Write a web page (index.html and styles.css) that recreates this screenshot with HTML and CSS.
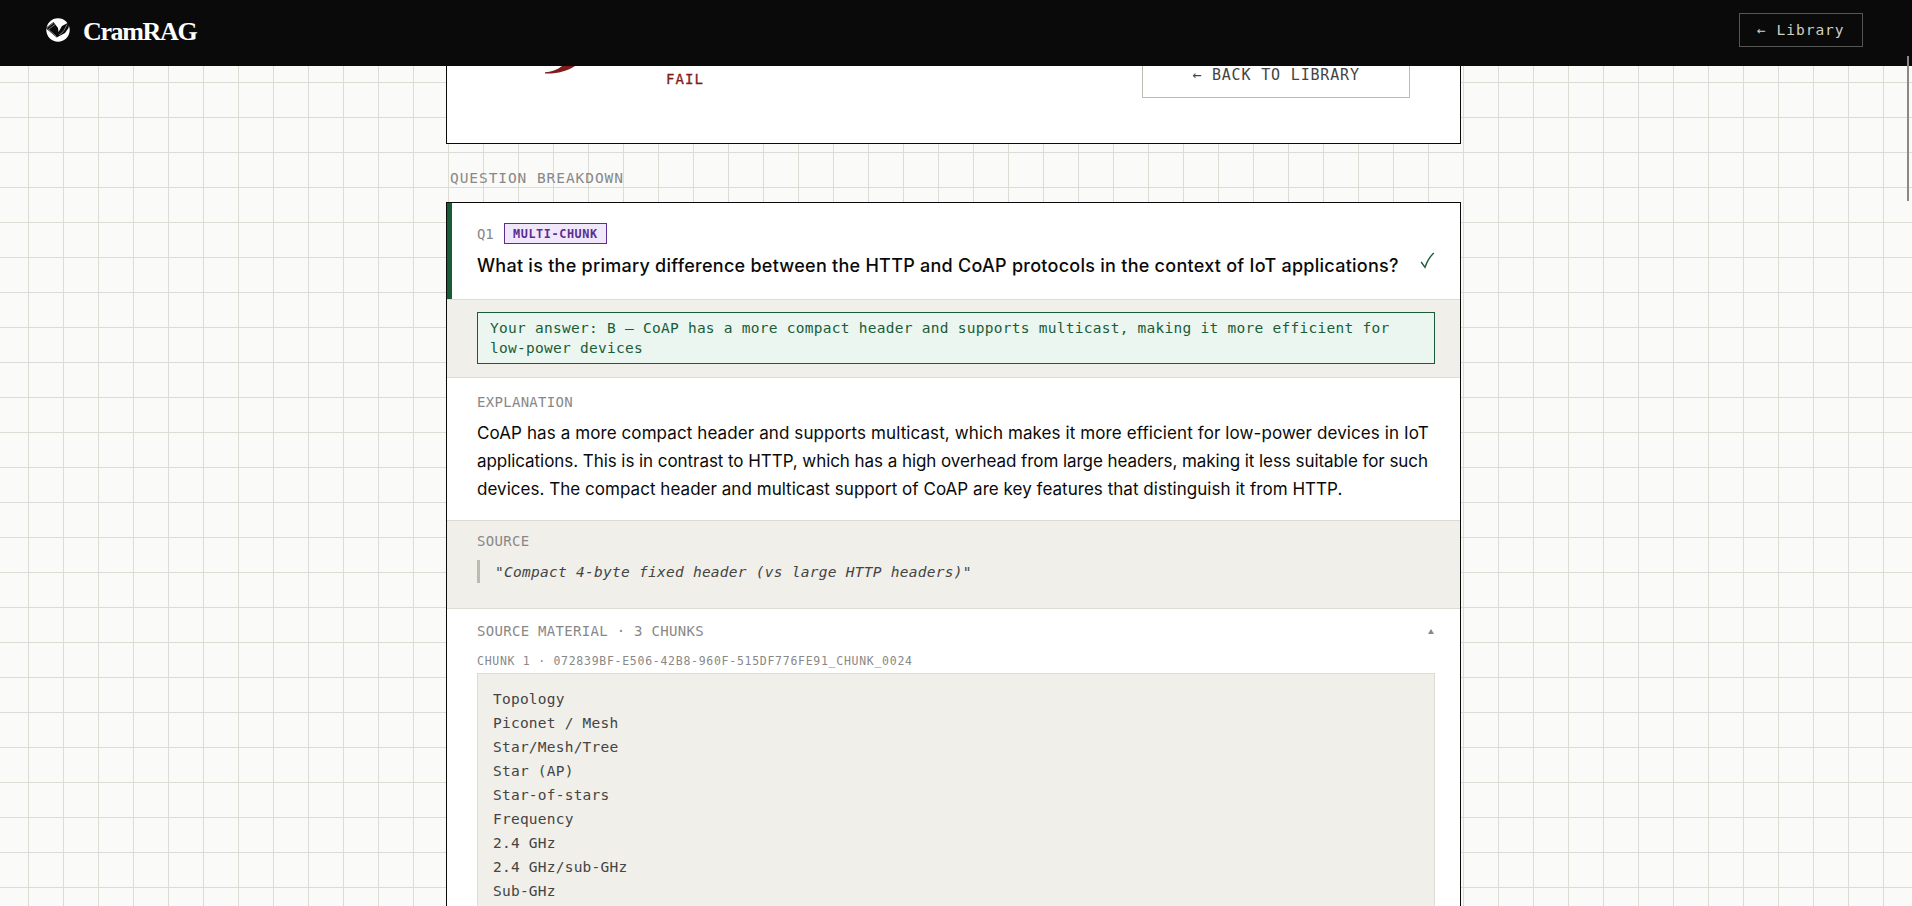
FILE: index.html
```html
<!DOCTYPE html>
<html lang="en">
<head>
<meta charset="utf-8">
<title>CramRAG</title>
<link rel="stylesheet" href="styles.css">
</head>
<body>
<header class="nav">
  <div class="brand">
    <svg class="logo" viewBox="0 0 26 24" width="26" height="24">
      <circle cx="13" cy="12" r="11.7" fill="#fff"/>
      <path d="M0.500 10 L8.500 4 L13 10 L13.500 14 L17 8 L24.500 4 L23.500 10 L20 15 L11.700 19.500 Z" fill="#0a0a0a"/>
      <path d="M1.500 10 L8.500 5 M2.500 10.500 L11.500 18.500 M4 11 L10 6.500 M14 17 C18 15 20 11 22 6.500" stroke="#aaa" stroke-width=".7" fill="none"/>
    </svg>
    <span class="name">CramRAG</span>
  </div>
  <a class="lib">← Library</a>
</header>
<main class="page">
  <section class="card score">
    <div class="result"><span class="big"><svg width="30" height="8" viewBox="0 0 30 8"><path d="M0 6.200 C6 6 12 4 17 0 H30 C22 5 12 8 0 7.500 Z" fill="#7f1d1d"/></svg></span><span class="fail">FAIL</span></div>
    <a class="back">← BACK TO LIBRARY</a>
  </section>
  <h2 class="heading">QUESTION BREAKDOWN</h2>
  <section class="card">
    <div class="question">
      <div class="qbody">
        <div class="meta"><span class="qn">Q1</span><span class="tag">MULTI-CHUNK</span></div>
        <div class="qtext">What is the primary difference between the HTTP and CoAP protocols in the context of IoT applications?</div>
      </div>
      <svg class="tick" width="15" height="17" viewBox="0 0 15 17"><path d="M1.200 10 L5 15.300 C7 9.500 10 4.500 13.800 1" fill="none" stroke="#1a5c38" stroke-width="1.400"/></svg>
    </div>
    <div class="answer"><div class="given">Your answer: B — CoAP has a more compact header and supports multicast, making it more efficient for<br>low-power devices</div></div>
    <div class="explain">
      <div class="label">EXPLANATION</div>
      <p class="prose"><span class="l1">CoAP has a more compact header and supports multicast, which makes it more efficient for low-power devices in IoT</span><br><span class="l2">applications. This is in contrast to HTTP, which has a high overhead from large headers, making it less suitable for such</span><br><span class="l3">devices. The compact header and multicast support of CoAP are key features that distinguish it from HTTP.</span></p>
    </div>
    <div class="source">
      <div class="label">SOURCE</div>
      <blockquote class="quote">"Compact 4-byte fixed header (vs large HTTP headers)"</blockquote>
    </div>
    <div class="material">
      <div class="toggle"><span class="label">SOURCE MATERIAL · 3 CHUNKS</span><i class="caret"></i></div>
      <div class="chunkid">CHUNK 1 · 072839BF-E506-42B8-960F-515DF776FE91_CHUNK_0024</div>
      <pre class="chunk">Topology
Piconet / Mesh
Star/Mesh/Tree
Star (AP)
Star-of-stars
Frequency
2.4 GHz
2.4 GHz/sub-GHz
Sub-GHz</pre>
    </div>
  </section>
</main>
<div class="scroll"></div>
</body>
</html>
```
FILE: styles.css
```css
* { box-sizing: border-box; }
html, body { margin: 0; height: 906px; overflow: hidden; }
body {
  position: relative;
  background-color: #fafaf8;
  background-image:
    linear-gradient(to right, #dcdcd4 1px, transparent 1px),
    linear-gradient(to bottom, #dcdcd4 1px, transparent 1px);
  background-size: 35px 35px;
  background-position: 28px 12px;
  font-family: "DejaVu Sans Mono", monospace;
  color: #0a0a0a;
}
.nav {
  height: 66px;
  background: #0a0a0a;
  display: flex;
  justify-content: space-between;
  align-items: flex-start;
  padding: 13px 49px 0 45px;
}
.brand { display: flex; gap: 12px; padding-top: 5px; }
.logo { display: block; }
.name {
  font: 700 26px/28px "Liberation Serif", serif;
  letter-spacing: -1.350px;
  color: #fff;
}
.lib {
  width: 124px;
  height: 34px;
  border: 1px solid #555;
  color: #d0d0c8;
  font-size: 14.500px;
  line-height: 32px;
  padding-left: 17px;
  letter-spacing: 1px;
  white-space: pre;
}
.page { width: 1015px; margin-left: 446px; height: 840px; overflow: hidden; }
.card { border: 1px solid #0a0a0a; background: #fff; }
.score {
  height: 78px;
  border-top: 0;
  display: flex;
  justify-content: space-between;
  padding: 0 50px 0 98px;
}
.result { display: flex; }
.big { width: 121px; }
.big svg { display: block; }
.fail { font-size: 14px; line-height: 26px; letter-spacing: 1.100px; color: #7f1d1d; -webkit-text-stroke: 0.300px #7f1d1d; }
.back {
  width: 268px;
  height: 32px;
  border: 1px solid #bbbbb0;
  border-top: 0;
  color: #444;
  text-align: center;
  font-size: 15px;
  line-height: 18px;
  letter-spacing: 0.830px;
}
.heading {
  margin: 0;
  height: 58px;
  padding: 24px 0 0 4px;
  font-size: 14.500px;
  font-weight: 400;
  line-height: 20px;
  letter-spacing: 0.930px;
  color: #888;
}
.question {
  display: flex;
  justify-content: space-between;
  height: 96px;
  border-left: 5px solid #1a5c38;
  padding: 20px 25px 0;
}
.meta { display: flex; align-items: center; gap: 11px; height: 21px; }
.qn { font-size: 14px; letter-spacing: -0.200px; color: #888; width: 16px; }
.tag {
  width: 103px;
  height: 21px;
  border: 1px solid #5b2d91;
  background: #f0e8fa;
  color: #5b2d91;
  font-size: 11.800px;
  font-weight: 700;
  line-height: 20px;
  padding-left: 8px;
  letter-spacing: 0.600px;
  white-space: nowrap;
}
.qtext {
  margin-top: 7px;
  font: 500 18px/30px Inter, sans-serif;
  letter-spacing: 0.262px;
  white-space: nowrap;
}
.tick { margin-top: 29px; flex: none; }
.answer {
  height: 78px;
  border-top: 1px solid #dcdcd4;
  background: #f0efea;
  padding: 12px 25px 0 30px;
}
.given {
  height: 52px;
  border: 1px solid #1a5c38;
  background: #ebf6f0;
  color: #1a5c38;
  padding: 5px 0 0 12px;
  font-size: 14.500px;
  line-height: 20px;
  letter-spacing: 0.265px;
  white-space: nowrap;
}
.explain { height: 143px; border-top: 1px solid #dcdcd4; padding: 14px 25px 0 30px; }
.label { font-size: 14px; line-height: 21px; letter-spacing: 0.300px; color: #888; }
.prose {
  margin: 6px 0 0;
  font: 400 17px/28px Inter, sans-serif;
  white-space: nowrap;
}
.l1 { letter-spacing: 0.097px; }
.l2 { letter-spacing: -0.060px; }
.l3 { letter-spacing: 0.035px; }
.source {
  height: 89px;
  border-top: 1px solid #dcdcd4;
  border-bottom: 1px solid #dcdcd4;
  background: #f0efea;
  padding: 10px 25px 0 30px;
}
.quote {
  margin: 8px 0 0;
  height: 23px;
  border-left: 3px solid #bbbbb0;
  padding-left: 15px;
  font-size: 14.500px;
  font-style: italic;
  line-height: 24px;
  letter-spacing: 0.265px;
  color: #444;
}
.material { padding: 11px 25px 0 30px; }
.toggle { display: flex; justify-content: space-between; align-items: center; height: 22px; }
.caret {
  margin-right: 1px;
  border-left: 3px solid transparent;
  border-right: 3px solid transparent;
  border-bottom: 5px solid #888;
}
.chunkid {
  margin-top: 10px;
  height: 21px;
  font-size: 11.500px;
  line-height: 18px;
  letter-spacing: 0.720px;
  color: #888;
}
.chunk {
  margin: 0;
  height: 300px;
  border: 1px solid #dcdcd4;
  background: #f0efea;
  padding: 13px 15px;
  font: 14.500px/24px "DejaVu Sans Mono", monospace;
  letter-spacing: 0.230px;
  color: #444;
}
.scroll {
  position: absolute;
  left: 1907px;
  top: 56px;
  width: 2px;
  height: 145px;
  background: #888;
}
```
